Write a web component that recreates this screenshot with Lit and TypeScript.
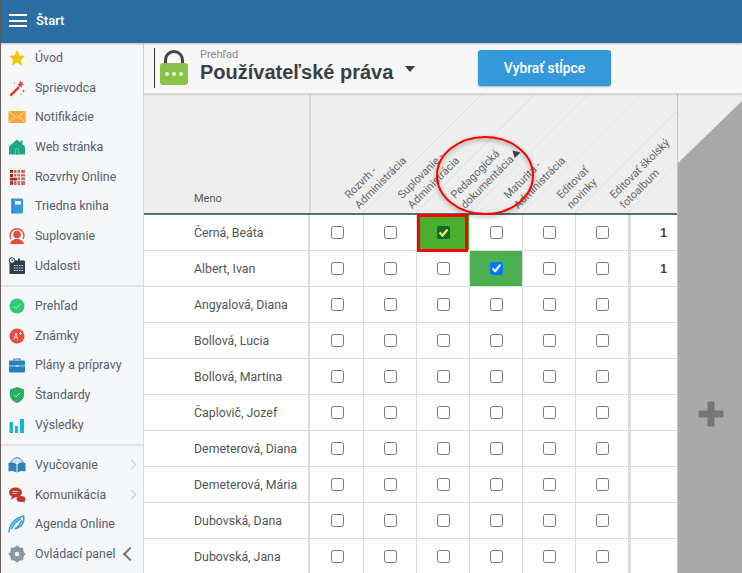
import { LitElement, html, css, svg } from 'lit';
import { customElement } from 'lit/decorators.js';

// sidebar icons, 18x18 box
const icons: Record<string, unknown> = {
  star: svg`<path d="M9 1l2.400 5.200 5.600.7-4.100 3.900 1.100 5.600L9 13.600l-5 2.800 1.100-5.600L1 6.900l5.600-.7z" fill="#f5c211"/>`,
  wand: svg`<path d="M1.500 15.800l8.500-8.500 1.700 1.700-8.500 8.500z" fill="#d9342b"/><path d="M12 1l.8 2.200 2.200-.6-.9 2.100 2 1.200-2.300.5.1 2.300-1.800-1.500-1.900 1.300.6-2.200-1.900-1.300 2.300-.2z" fill="#e0483e"/><circle cx="15.500" cy="12" r="1" fill="#d9342b"/><circle cx="13" cy="15" r=".8" fill="#e77"/><circle cx="6.500" cy="4" r=".7" fill="#e77"/>`,
  mail: svg`<rect x="0.500" y="3" width="17" height="12" fill="#f7a631"/><path d="M1 3.500l8 6.500 8-6.500M1 14.500l6-6M17 14.500l-6-6" fill="none" stroke="#fde2b5" stroke-width="1"/>`,
  home: svg`<path d="M9 1.500l8 7v8H1v-8z" fill="#1ea586"/><rect x="12.500" y="2.500" width="2" height="4" fill="#1ea586"/><path d="M7 16.500V10.500h4v6z" fill="#5cc2aa"/><path d="M8 16.500V11.500h2v5z" fill="#1ea586"/>`,
  grid: svg`<path d="M2 2h15v15H2z" fill="#cf6b62"/><path d="M5.500 1v17M9 1v17M12.500 1v17M1.500 5.500h16M1.500 9h16M1.500 12.500h16" stroke="#f5f7f9" stroke-width="1"/><rect x="2" y="6" width="3" height="3" fill="#b02a20"/><rect x="2" y="2" width="3" height="3" fill="#b02a20"/><rect x="2" y="10" width="7" height="2.500" fill="#b02a20"/><rect x="2" y="13.500" width="3" height="3" fill="#b02a20"/>`,
  book: svg`<rect x="3.500" y="1.500" width="11.500" height="15" rx="1.500" fill="#3498db"/><rect x="3.500" y="1.500" width="1.500" height="15" fill="#2a7fc0"/><rect x="7" y="4" width="6" height="3.500" fill="#eaf4fb"/>`,
  person: svg`<path d="M9 1a7.500 7.500 0 0 1 6.500 11.300l-1-.8a6.200 6.200 0 1 0-11 0l-1 .8A7.500 7.500 0 0 1 9 1z" fill="#e74c3c"/><circle cx="9" cy="7.500" r="3.800" fill="#e74c3c"/><path d="M2 17c.5-3.500 3.500-4 5.500-5h3c2 1 5 1.500 5.500 5z" fill="#e74c3c"/>`,
  cal: svg`<rect x="1.500" y="3.500" width="15.500" height="13.500" rx="1" fill="#2c3e50"/><path d="M6 8.500h9M6 11h9M6 13.500h9" stroke="#dfe6ea" stroke-width="1" stroke-dasharray="1.500 1"/><circle cx="4" cy="3.500" r="2.800" fill="#f5f7f9" stroke="#2c3e50"/><path d="M4 2v1.500h1.300" stroke="#2c3e50" fill="none" stroke-width=".8"/><rect x="10" y="1.500" width="2" height="3" fill="#2c3e50"/>`,
  ok: svg`<circle cx="9" cy="9" r="7.500" fill="#2ecc71"/><path d="M6 9.200l2.200 2.200 4-4.200" fill="none" stroke="#c9f3da" stroke-width="1"/>`,
  grade: svg`<circle cx="9" cy="9" r="7.500" fill="#e74c3c"/><path d="M6 12.500l2-6.500 1.800 6.500M6.800 10.500h2.400M11 6.500h3M12.500 5v3" fill="none" stroke="#fbd5d0" stroke-width="1"/>`,
  case: svg`<path d="M6 4.500V3h6v1.500" fill="none" stroke="#2980b9" stroke-width="1.200"/><rect x="1" y="4.500" width="16" height="12" rx="1" fill="#2980b9"/><path d="M1 10h16" stroke="#a9d2ee" stroke-width="1"/><rect x="7.500" y="9" width="3" height="2" fill="#a9d2ee"/>`,
  shield: svg`<path d="M9 1l7 2.500V9c0 4-3.500 6.800-7 8-3.500-1.200-7-4-7-8V3.500z" fill="#27ae60"/><path d="M6.200 8.800l2 2 3.600-3.800" fill="none" stroke="#c9f3da" stroke-width="1"/>`,
  bars: svg`<rect x="1.500" y="6" width="3.500" height="11" fill="#16b7d0"/><rect x="7" y="10" width="3" height="7" fill="#16b7d0"/><rect x="12" y="3" width="4" height="14" fill="#16b7d0"/>`,
  open: svg`<path d="M2.500 7C4 3.500 6.500 2 9 1.500c2.500.5 5 2 6.500 5.500" fill="#cfe2ef" stroke="#3f87bd" stroke-width="1"/><path d="M.5 7c3-1 6-.5 8 1v8.500c-2-1.500-5-2-8-1zM17.500 7c-3-1-6-.5-8 1v8.500c2-1.500 5-2 8-1z" fill="#2f7fb9"/>`,
  chat: svg`<ellipse cx="7.500" cy="6.500" rx="6.500" ry="5" fill="#c0392b"/><path d="M4 10l-1 4 4-3z" fill="#c0392b"/><path d="M4.500 5.500h6M4.500 7.500h4" stroke="#f2c7c2"/><ellipse cx="13" cy="13" rx="4.500" ry="3" fill="#c0392b"/><path d="M14 15l3 2-1-3z" fill="#c0392b"/>`,
  pen: svg`<path d="M1 17.500c.5-7 4-13.500 14.500-16.500C17 6.500 13.500 13 6.500 14" fill="none" stroke="#3f9fe0" stroke-width="1.600"/><path d="M3.500 14C5 9.500 8.500 6 13 3.500M7.500 13.500c2.500-1.500 5-4.500 6.500-8" fill="none" stroke="#3f9fe0" stroke-width="1.600"/>`,
  gear: svg`<circle cx="9" cy="9" r="5.500" fill="none" stroke="#8a979c" stroke-width="3.500"/><path d="M9 .8v16.400M.8 9h16.400M3.200 3.200l11.600 11.600M14.800 3.200L3.200 14.800" stroke="#8a979c" stroke-width="2.600"/><circle cx="9" cy="9" r="2.200" fill="#f5f7f9"/>`,
};

interface NavItem { label: string; icon: string; more?: boolean; back?: boolean; }

const navGroups: NavItem[][] = [
  [
    { label: 'Úvod', icon: 'star' },
    { label: 'Sprievodca', icon: 'wand' },
    { label: 'Notifikácie', icon: 'mail' },
    { label: 'Web stránka', icon: 'home' },
    { label: 'Rozvrhy Online', icon: 'grid' },
    { label: 'Triedna kniha', icon: 'book' },
    { label: 'Suplovanie', icon: 'person' },
    { label: 'Udalosti', icon: 'cal' },
  ],
  [
    { label: 'Prehľad', icon: 'ok' },
    { label: 'Známky', icon: 'grade' },
    { label: 'Plány a prípravy', icon: 'case' },
    { label: 'Štandardy', icon: 'shield' },
    { label: 'Výsledky', icon: 'bars' },
  ],
  [
    { label: 'Vyučovanie', icon: 'open', more: true },
    { label: 'Komunikácia', icon: 'chat', more: true },
    { label: 'Agenda Online', icon: 'pen' },
    { label: 'Ovládací panel', icon: 'gear', back: true },
  ],
];

const columns = [
  ['Rozvrh -', 'Administrácia'],
  ['Suplovanie -', 'Administrácia'],
  ['Pedagogická', 'dokumentácia'],
  ['Maturita -', 'Administrácia'],
  ['Editovať', 'novinky'],
  ['Editovať školský', 'fotoalbum'],
];

const people = [
  'Černá, Beáta',
  'Albert, Ivan',
  'Angyalová, Diana',
  'Bollová, Lucia',
  'Bollová, Martina',
  'Čaplovič, Jozef',
  'Demeterová, Diana',
  'Demeterová, Mária',
  'Dubovská, Dana',
  'Dubovská, Jana',
];

@customElement('app-root')
export class AppRoot extends LitElement {
  static styles = css`
    :host {
      display: block;
      width: 742px;
      height: 573px;
      overflow: hidden;
      font-family: Roboto, "Liberation Sans", sans-serif;
      font-size: 12.35px;
      color: #555d6b;
      background: #fff;
    }

    .topbar {
      height: 43px;
      display: flex;
      align-items: center;
      gap: 9px;
      padding: 0 0 2px 8px;
      box-sizing: border-box;
      background: #2b6ea4;
      border-left: 1px solid #5a5a5a;
      color: #fff;
      font-weight: 500;
      font-size: 13px;
      box-shadow: 0 1px 2px rgba(0, 0, 0, 0.25);
      position: relative;
      z-index: 2;
    }
    .burger {
      width: 18px;
      height: 13px;
      border-top: 2px solid #fff;
      border-bottom: 2px solid #fff;
      box-sizing: border-box;
      position: relative;
    }
    .burger::after {
      content: '';
      position: absolute;
      left: 0;
      right: 0;
      top: 3.5px;
      height: 2px;
      background: #fff;
    }

    .layout {
      display: flex;
      height: 530px;
    }

    aside {
      width: 144px;
      flex: none;
      box-sizing: border-box;
      background: #f5f7f9;
      border-left: 1px solid #6d5f5c;
      border-right: 1px solid #dcdcdc;
    }
    .group {
      padding-bottom: 4px;
      margin-bottom: 4.6px;
      border-bottom: 2px solid #e2e4e6;
    }
    .group:last-child {
      border-bottom: none;
    }
    .item {
      height: 29.7px;
      display: flex;
      align-items: center;
      position: relative;
      white-space: nowrap;
    }
    .item svg {
      width: 18px;
      height: 18px;
      margin: 0 9px 0 7px;
      flex: none;
    }
    .chev {
      position: absolute;
      right: 8px;
      width: 6px;
      height: 6px;
      border-top: 1px solid #c6cacd;
      border-right: 1px solid #c6cacd;
      transform: rotate(45deg);
    }
    .back {
      position: absolute;
      right: 8px;
      width: 8px;
      height: 8px;
      border-bottom: 2px solid #6d7780;
      border-left: 2px solid #6d7780;
      transform: rotate(45deg);
    }

    main {
      flex: 1;
      min-width: 0;
      display: flex;
      flex-direction: column;
    }

    .subhead {
      height: 51px;
      flex: none;
      box-sizing: border-box;
      display: flex;
      align-items: flex-start;
      background: #f7f7f7;
      border-bottom: 1px solid #d4d4d4;
      box-shadow: 0 1px 2px rgba(0, 0, 0, 0.12);
      padding: 5px 0 0 10px;
      position: relative;
      z-index: 1;
    }
    .lock {
      border-left: 1px solid #333;
      height: 40px;
      width: 35px;
      flex: none;
      padding-left: 5px;
      box-sizing: border-box;
    }
    .lock svg {
      width: 29px;
      height: 40px;
      display: block;
    }
    .heading {
      margin-left: 11px;
      width: 278px;
      flex: none;
    }
    .crumb {
      font-size: 11px;
      line-height: 11px;
      color: #8a8a8a;
      margin-top: 1px;
    }
    .title {
      font-family: "Liberation Sans", sans-serif;
      font-weight: bold;
      font-size: 20px;
      line-height: 24px;
      color: #3a3f47;
      display: flex;
      align-items: center;
      gap: 12px;
    }
    .caret {
      width: 0;
      height: 0;
      border-left: 5px solid transparent;
      border-right: 5px solid transparent;
      border-top: 6px solid #3a3f47;
      margin-top: -7px;
    }
    .pick {
      width: 133px;
      height: 36px;
      margin-top: 2px;
      border: none;
      border-radius: 3px;
      background: #3498db;
      color: #fff;
      font-family: Roboto, sans-serif;
      font-weight: 500;
      font-size: 13.8px;
      box-shadow: 0 1px 2px rgba(0, 0, 0, 0.25);
    }

    .sheet {
      flex: 1;
      min-height: 0;
      display: flex;
    }
    .grid {
      width: 533px;
      flex: none;
    }
    .head {
      height: 121px;
      box-sizing: border-box;
      background: #eee;
      border-bottom: 2px solid #546e7a;
      position: relative;
    }
    .head .rule {
      position: absolute;
      left: 165px;
      top: 0;
      bottom: 0;
      width: 2px;
      background: #dcdcdc;
    }
    .meno {
      position: absolute;
      left: 50px;
      bottom: 8px;
      font-size: 11px;
      color: #555;
    }
    .slant {
      position: absolute;
      left: 0;
      top: 0;
      overflow: visible;
    }
    .label {
      position: absolute;
      bottom: 1px;
      white-space: nowrap;
      font-size: 11px;
      line-height: 14px;
      color: #666;
      transform-origin: 0 100%;
      transform: rotate(-45deg);
    }
    .sort {
      display: inline-block;
      margin-left: 1px;
      vertical-align: 1px;
      border-left: 4.5px solid transparent;
      border-right: 4.5px solid transparent;
      border-bottom: 7px solid #444;
    }
    .ring {
      position: absolute;
      left: 292px;
      top: 42px;
      overflow: visible;
      filter: drop-shadow(0 2px 2px rgba(0, 0, 0, 0.4));
      z-index: 3;
    }

    .row {
      height: 36px;
      box-sizing: border-box;
      display: grid;
      grid-template-columns: 166px repeat(6, 53px) 3px 46px;
      border-bottom: 1px solid #ddd;
    }
    .name {
      padding-left: 50px;
      display: flex;
      align-items: center;
      border-right: 2px solid #dcdcdc;
      color: #555;
    }
    .cell {
      display: flex;
      align-items: center;
      justify-content: center;
      border-left: 1px solid #ddd;
      padding-left: 1px;
      position: relative;
    }
    .cell:nth-child(2) {
      border-left: none;
      padding-left: 2px;
    }
    .cell input {
      margin: 0;
      width: 13px;
      height: 13px;
    }
    .cell.on {
      background: #4caf50;
    }
    .cell.marked {
      background: #4cae2f;
    }
    .cell.marked::after {
      content: '';
      position: absolute;
      left: 0;
      top: -1px;
      right: 1px;
      bottom: -2px;
      border: 3px solid #f00;
    }
    .tick {
      width: 13px;
      height: 13px;
      border-radius: 2px;
      background: #0b6b35;
    }
    .tick svg {
      display: block;
    }
    .gap {
      background: #dcdcdc;
    }
    .count {
      display: flex;
      align-items: center;
      justify-content: flex-end;
      padding-right: 10px;
      font-weight: bold;
      font-size: 12px;
      color: #444;
      font-family: "Liberation Sans", sans-serif;
    }

    .side {
      flex: 1;
      background: #a9a9a9;
      border-left: 1px solid #c4c4c4;
      position: relative;
    }
    .side .cut {
      display: block;
    }
    .plus {
      position: absolute;
      left: 20px;
      top: 307px;
    }
  `;

  private renderHead() {
    return html`
      <div class="head">
        <svg class="slant" width="533" height="119">
          ${[219, 272, 325, 378, 431, 484].map(
            (x) => svg`<line x1=${x} y1="119" x2=${x + 119} y2="0" stroke="#dfdfdf" stroke-width="1"/>`
          )}
        </svg>
        <div class="rule"></div>
        <div class="meno">Meno</div>
        ${columns.map(
          (lines, i) => html`
            <div class="label" style="left:${i * 53 + 218}px">
              ${lines[0]}<br />${lines[1]}${i === 2 ? html`<span class="sort"></span>` : ''}
            </div>
          `
        )}
        <svg class="ring" width="100" height="80">
          <ellipse cx="49" cy="39.500" rx="48" ry="38.500" fill="none" stroke="#f00" stroke-width="2"/>
        </svg>
      </div>
    `;
  }

  private renderCell(row: number, col: number) {
    if (row === 0 && col === 2) {
      return html`
        <div class="cell marked">
          <span class="tick">
            <svg width="13" height="13"><path d="M2.500 6.500l3 3 5-6" fill="none" stroke="#ffeb3b" stroke-width="2.200"/></svg>
          </span>
        </div>
      `;
    }
    if (row === 1 && col === 3) {
      return html`<div class="cell on"><input type="checkbox" checked /></div>`;
    }
    return html`<div class="cell"><input type="checkbox" /></div>`;
  }

  render() {
    return html`
      <div class="topbar"><span class="burger"></span>Štart</div>
      <div class="layout">
        <aside>
          ${navGroups.map(
            (group) => html`
              <div class="group">
                ${group.map(
                  (item) => html`
                    <div class="item">
                      <svg viewBox="0 0 18 18">${icons[item.icon]}</svg>
                      ${item.label}
                      ${item.more ? html`<span class="chev"></span>` : ''}
                      ${item.back ? html`<span class="back"></span>` : ''}
                    </div>
                  `
                )}
              </div>
            `
          )}
        </aside>
        <main>
          <div class="subhead">
            <div class="lock">
              <svg viewBox="0 0 29 40">
                <path d="M5.500 17V12a8.500 8.500 0 0 1 17 0v5" fill="none" stroke="#444" stroke-width="3"/>
                <rect x="0" y="15" width="28" height="22" rx="3" fill="#8bc34a"/>
                <circle cx="7" cy="26" r="2" fill="#eef6e2"/>
                <circle cx="14" cy="26" r="2" fill="#eef6e2"/>
                <circle cx="21" cy="26" r="2" fill="#eef6e2"/>
              </svg>
            </div>
            <div class="heading">
              <div class="crumb">Prehľad</div>
              <div class="title">Používateľské práva <span class="caret"></span></div>
            </div>
            <button class="pick">Vybrať stĺpce</button>
          </div>
          <div class="sheet">
            <div class="grid">
              ${this.renderHead()}
              ${people.map(
                (name, row) => html`
                  <div class="row">
                    <div class="name">${name}</div>
                    ${columns.map((_, col) => this.renderCell(row, col))}
                    <div class="gap"></div>
                    <div class="count">${row < 2 ? '1' : ''}</div>
                  </div>
                `
              )}
            </div>
            <div class="side">
              <svg class="cut" width="64" height="72"><path d="M0 69L64 7V0H0z" fill="#eee"/></svg>
              <svg class="plus" width="26" height="26" viewBox="0 0 26 26"><path d="M10 1h6v9h9v6h-9v9h-6v-9H1v-6h9z" fill="#767676" stroke="#767676" stroke-linejoin="round"/></svg>
            </div>
          </div>
        </main>
      </div>
    `;
  }
}

declare global {
  interface HTMLElementTagNameMap {
    'app-root': AppRoot;
  }
}
